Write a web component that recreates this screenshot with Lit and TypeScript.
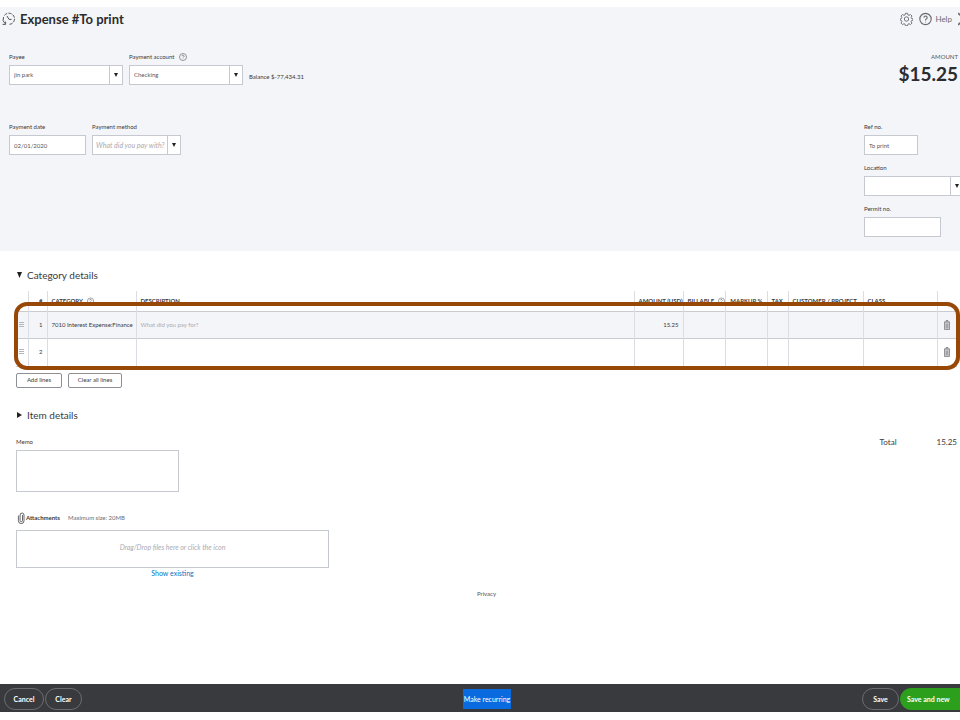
import { LitElement, html, css, svg, nothing } from "lit";
import { customElement, property } from "lit/decorators.js";

const helpIcon = svg`<circle cx="8" cy="8" r="7" /><path d="M6 6.3a2 2 0 1 1 3 1.8c-.7.4-1 .8-1 1.6" /><path d="M8 11.4v.8" />`;

const base = css`
  * { box-sizing: border-box; }
  svg { display: block; fill: none; stroke: currentColor; flex: none; }
  button, input, select, textarea { font: inherit; color: inherit; margin: 0; border-radius: 0; }
`;

@customElement("form-field")
class FormField extends LitElement {
  @property() label = "";
  @property() value = "";
  @property() placeholder = "";
  @property({ type: Boolean }) combo = false;
  @property({ type: Boolean }) help = false;

  static styles = [base, css`
    :host { display: block; flex: none; }
    .caption { display: flex; align-items: center; gap: 5px; height: 10px; margin-bottom: 3px; line-height: 10px; white-space: nowrap; color: #393a3d; }
    .caption svg { width: 8px; height: 8px; color: #6b6c72; }
    .box { display: block; position: relative; }
    .control {
      display: block; width: 100%; height: 20px; padding: 0 4px; border: 1px solid #c7c9d1;
      background: #fff; color: #55565b; outline: none; appearance: none;
    }
    .empty { padding: 0 3px; color: #a9abb3; font-style: italic; font-size: 7px; }
    .arrow {
      position: absolute; top: 1px; right: 1px; bottom: 1px; width: 13px; pointer-events: none;
      border-left: 1px solid #c7c9d1; background: #fff; display: grid; place-items: center;
    }
    .arrow svg { width: 4px; height: 4px; fill: #222; stroke: none; }
  `];

  render() {
    return html`
      <div class="caption">
        <label for="control">${this.label}</label>
        ${this.help ? html`<svg viewBox="0 0 16 16" stroke-width="1.4">${helpIcon}</svg>` : nothing}
      </div>
      <div class="box">
        ${this.combo
          ? html`<select id="control" class="control ${this.value ? "" : "empty"}">
                <option>${this.value || this.placeholder}</option>
              </select>
              <span class="arrow"><svg viewBox="0 0 4 4"><path d="M0 0h4L2 4z" /></svg></span>`
          : html`<input id="control" class="control" .value=${this.value} />`}
      </div>`;
  }
}

interface Line { category: string; hint: string; amount: string; }

const lines: Line[] = [
  { category: "7010 Interest Expense:Finance", hint: "What did you pay for?", amount: "15.25" },
  { category: "", hint: "", amount: "" },
];

@customElement("app-root")
class AppRoot extends LitElement {
  static styles = [base, css`
    :host {
      display: flex; flex-direction: column; min-height: 100vh; padding: 7px 0 8px; overflow: hidden;
      box-sizing: border-box; background: #fff; color: #393a3d;
      font-family: Lato, "Open Sans", sans-serif; font-size: 6px; line-height: 10px;
    }
    header { background: #f4f5f8; height: 244px; padding-left: 9px; overflow: hidden; }
    .bar { display: flex; align-items: center; height: 24px; }
    .bar h1 { margin: 0 auto 0 5px; font-size: 13px; line-height: 16px; font-weight: 700; color: #2b2c2f; }
    .history { width: 13px; height: 14px; margin-left: -7px; color: #55565b; }
    .tool { display: flex; align-items: center; gap: 3px; padding: 0; border: 0; background: none; color: #6b6c72; font-size: 8px; }
    .tool svg { width: 13px; height: 14px; }
    .tools { display: flex; gap: 6px; margin-right: -11px; }
    .fields { display: flex; align-items: flex-start; height: 70px; padding-top: 21px; gap: 6px; }
    .second { height: auto; }
    .w114 { width: 114px; }
    .w100 { width: 100px; }
    .w89 { width: 89px; }
    .w77 { width: 77px; }
    .w54 { width: 54px; }
    .balance { margin-top: 20px; font-size: 6px; }
    .amount { margin: 0 2px 0 auto; text-align: right; font-size: 6px; color: #55565b; }
    .amount strong { display: block; font-size: 19px; line-height: 24px; color: #2b2c2f; }
    .side { display: flex; flex-direction: column; gap: 8px; width: 96px; margin-left: auto; }

    main { flex: 1; padding: 16px 3px 0 16px; }
    h2 { display: flex; align-items: center; gap: 5px; margin: 0; padding-left: 1px; font-size: 10px; line-height: 16px; font-weight: 400; }
    h2 svg { width: 5px; height: 6px; fill: #222; stroke: none; }
    .lines { position: relative; margin-top: 8px; }
    .lines::after {
      content: ""; position: absolute; inset: 11px -3px -3px -2px;
      border: 4px solid #974706; border-radius: 13px; pointer-events: none;
    }
    table { width: 100%; border-collapse: collapse; table-layout: fixed; }
    th, td { padding: 0 4px; border-left: 1px solid #dcdde2; text-align: left; white-space: nowrap; overflow: hidden; }
    th:first-child, td:first-child { border-left: 0; padding: 0 3px; }
    th { height: 20px; font-weight: 700; font-size: 6px; }
    td { height: 27px; border-top: 1px solid #c9cbd0; }
    tbody tr:first-child { background: #f4f5f8; }
    tbody tr:last-child td { border-bottom: 1px solid #c9cbd0; height: 28px; }
    th.num, td.num { text-align: right; }
    th span { display: inline-flex; align-items: center; gap: 4px; }
    th svg { width: 7px; height: 8px; color: #6b6c72; }
    .hint { color: #a9abb3; }
    .grip { width: 5px; height: 6px; color: #b4b6bd; }
    .icon { display: block; margin: 0 auto; padding: 0; border: 0; background: none; color: #7d7e83; }
    .icon svg { width: 6px; height: 10px; fill: #d4d5d9; }

    .actions { display: flex; gap: 6px; margin: 6px 0 19px; }
    .small { height: 15px; padding: 0; border: 1px solid #8d9096; border-radius: 2px; background: #fff; line-height: 12px; }
    .add { width: 46px; }
    .clear { width: 54px; }
    .summary { display: flex; justify-content: space-between; margin-top: 14px; }
    .memo label { display: block; margin-bottom: 3px; }
    textarea { display: block; width: 163px; height: 42px; border: 1px solid #c7c9d1; background: #fff; resize: none; outline: none; }
    .total { display: flex; gap: 40px; font-size: 8px; height: 10px; margin: 0; }
    .total dd { margin: 0; }
    .attach { display: flex; align-items: center; gap: 1px; margin-top: 19px; height: 14px; padding-left: 1px; }
    .attach svg { width: 8px; height: 12px; color: #55565b; }
    .attach b { font-weight: 700; }
    .attach small { margin-left: 7px; font-size: 6px; color: #6b6c72; }
    .drop { width: 313px; height: 38px; margin-top: 5px; padding: 0 0 3px; display: block; border: 1px solid #c7c9d1; background: #fff; color: #a9abb3; font-style: italic; font-size: 7px; }
    .existing { width: 313px; text-align: center; font-size: 7px; line-height: 11px; }
    a { color: #0077c5; text-decoration: none; }
    .privacy { margin: 10px -12px 0 -16px; padding-left: 4px; text-align: center; }
    .privacy a { color: #55565b; }

    footer { display: grid; grid-template-columns: 1fr auto 1fr; align-items: center; height: 28px; padding: 1px 0 0 4px; margin-right: -10px; background: #393a3d; }
    .group { display: flex; gap: 1px; }
    .end { justify-content: flex-end; }
    .pill { height: 22px; padding: 0; border: 1px solid #6b6c72; border-radius: 11px; background: none; color: #fff; font-size: 7px; font-weight: 700; }
    .w40 { width: 40px; }
    .w37 { width: 37px; }
    .green { width: 70px; padding: 0 20px 0 6px; border-color: #2ca01c; background: #2ca01c; white-space: nowrap; }
    .recurring { height: 20px; padding: 0 1px; border: 0; background: #0a6ae0; color: #fff; font-size: 7px; white-space: nowrap; }
  `];

  private head(text: string, help = false) {
    return html`<span>${text}${help ? html`<svg viewBox="0 0 16 16" stroke-width="1.4">${helpIcon}</svg>` : nothing}</span>`;
  }

  private row(line: Line, index: number) {
    return html`<tr>
      <td><svg class="grip" viewBox="0 0 5 6" stroke-width="1"><path d="M0 .5h5M0 2.5h5M0 4.5h5" /></svg></td>
      <td class="num">${index + 1}</td>
      <td>${line.category}</td>
      <td class="hint">${line.hint}</td>
      <td class="num">${line.amount}</td>
      <td></td><td></td><td></td><td></td><td></td>
      <td><button class="icon" aria-label="Delete line">
        <svg viewBox="0 0 6 10"><path d="M0 2h6M2 2V.5h2V2M.5 2v7.500h5V2M2.200 3.500v5M3.800 3.500v5" stroke-width=".8" /></svg>
      </button></td>
    </tr>`;
  }

  render() {
    return html`
      <header>
        <div class="bar">
          <svg class="history" viewBox="0 0 13 14">
            <path d="M3 11.6A5.6 5.6 0 0 1 1.6 5" /><path d="M2.4 3.4A5.6 5.6 0 0 1 7 1.2a5.6 5.6 0 0 1 2 10.8l-2 .4" stroke-dasharray="3.4 1.2" />
            <path d="M.6 12.4h3V9.6M5 4l2 3.4h2.6" />
          </svg>
          <h1>Expense #To print</h1>
          <div class="tools">
            <button class="tool" aria-label="Settings">
              <svg viewBox="0 0 24 24" stroke-width="1.7"><circle cx="12" cy="12" r="4" /><path d="M10 1.500h4l.7 3 2 .8 2.600-1.600 2.800 2.800-1.600 2.600.8 2 3 .7v2.400l-3 .7-.8 2 1.600 2.600-2.800 2.800-2.600-1.600-2 .8-.7 3h-4l-.7-3-2-.8-2.600 1.600-2.800-2.800 1.600-2.600-.8-2-2.200-.7v-2.400l2.200-.7.8-2-1.600-2.600 2.800-2.800 2.600 1.600 2-.8z" /></svg>
            </button>
            <button class="tool">
              <svg viewBox="0 0 16 16" stroke-width="1.4">${helpIcon}</svg>Help
            </button>
            <button class="tool" aria-label="Close">
              <svg viewBox="0 0 12 13" stroke-width="1.5"><path d="m0 1 12 11M12 1 0 12" /></svg>
            </button>
          </div>
        </div>
        <div class="fields">
          <form-field class="w114" label="Payee" value="jin park" combo></form-field>
          <form-field class="w114" label="Payment account" value="Checking" combo help></form-field>
          <span class="balance">Balance $-77,434.31</span>
          <div class="amount">AMOUNT<strong>$15.25</strong></div>
        </div>
        <div class="fields second">
          <form-field class="w77" label="Payment date" value="02/01/2020"></form-field>
          <form-field class="w89" label="Payment method" placeholder="What did you pay with?" combo></form-field>
          <div class="side">
            <form-field class="w54" label="Ref no." value="To print"></form-field>
            <form-field class="w100" label="Location" combo></form-field>
            <form-field class="w77" label="Permit no."></form-field>
          </div>
        </div>
      </header>
      <main>
        <h2><svg viewBox="0 0 5 6"><path d="M0 0h5L2.500 6z" /></svg>Category details</h2>
        <div class="lines">
          <table>
            <colgroup>
              <col style="width:12px" /><col style="width:19px" /><col style="width:89px" /><col />
              <col style="width:49px" /><col style="width:42px" /><col style="width:42px" /><col style="width:21px" />
              <col style="width:75px" /><col style="width:74px" /><col style="width:20px" />
            </colgroup>
            <thead><tr>
              <th></th><th class="num">#</th><th>${this.head("CATEGORY", true)}</th><th>DESCRIPTION</th>
              <th>AMOUNT (USD)</th><th>${this.head("BILLABLE", true)}</th><th class="num">MARKUP %</th><th>TAX</th>
              <th>CUSTOMER / PROJECT</th><th>CLASS</th><th></th>
            </tr></thead>
            <tbody>${lines.map((line, i) => this.row(line, i))}</tbody>
          </table>
        </div>
        <div class="actions">
          <button class="small add">Add lines</button>
          <button class="small clear">Clear all lines</button>
        </div>
        <h2><svg viewBox="0 0 5 6"><path d="M0 0v6l5-3z" /></svg>Item details</h2>
        <div class="summary">
          <div class="memo"><label for="memo">Memo</label><textarea id="memo"></textarea></div>
          <dl class="total"><dt>Total</dt><dd>15.25</dd></dl>
        </div>
        <div class="attach">
          <svg viewBox="0 0 8 12" stroke-width=".9"><path d="M5.500 3v5.500a1.200 1.200 0 0 1-2.400 0V3a1.900 1.900 0 0 1 3.900 0v5.800a2.700 2.700 0 0 1-5.600 0V3.500" /></svg>
          <b>Attachments</b><small>Maximum size: 20MB</small>
        </div>
        <button class="drop">Drag/Drop files here or click the icon</button>
        <div class="existing"><a href="#existing">Show existing</a></div>
        <div class="privacy"><a href="#privacy">Privacy</a></div>
      </main>
      <footer>
        <div class="group"><button class="pill w40">Cancel</button><button class="pill w37">Clear</button></div>
        <button class="recurring">Make recurring</button>
        <div class="group end"><button class="pill w37">Save</button><button class="pill green">Save and new</button></div>
      </footer>`;
  }
}
